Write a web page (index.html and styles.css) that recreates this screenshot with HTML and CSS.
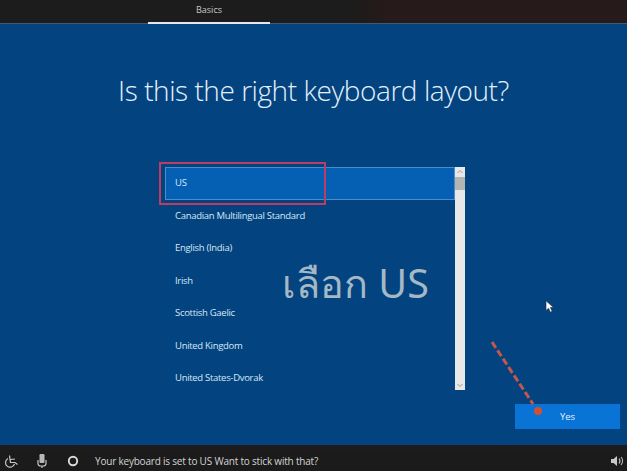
FILE: index.html
```html
<!DOCTYPE html>
<html lang="en">

<head>
    <meta charset="UTF-8">
    <meta name="viewport" content="width=device-width, initial-scale=1.0">
    <title>Keyboard layout</title>
    <link rel="stylesheet" href="styles.css">
</head>

<body>
    <div id="setup">
        <header class="topbar">
            <div class="tab">Basics</div>
        </header>

        <main class="content">
            <h1 class="title">Is this the right keyboard layout?</h1>

            <div class="picker">
                <ul class="layouts">
                    <li class="layout selected">US</li>
                    <li class="layout">Canadian Multilingual Standard</li>
                    <li class="layout">English (India)</li>
                    <li class="layout">Irish</li>
                    <li class="layout">Scottish Gaelic</li>
                    <li class="layout">United Kingdom</li>
                    <li class="layout">United States-Dvorak</li>
                </ul>
                <div class="scrollbar">
                    <svg class="scroll-arrow" viewBox="0 0 10 10" width="10" height="10">
                        <path d="M2.5 6 5 3.5 7.5 6" fill="none" stroke="#9a9a9a" stroke-width="1" />
                    </svg>
                    <div class="thumb"></div>
                    <div class="track"></div>
                    <svg class="scroll-arrow" viewBox="0 0 10 10" width="10" height="10">
                        <path d="M2.5 4 5 6.5 7.5 4" fill="none" stroke="#9a9a9a" stroke-width="1" />
                    </svg>
                </div>
            </div>

            <div class="actions">
                <button class="yes">Yes</button>
            </div>
        </main>

        <footer class="bottombar">
            <svg class="icon icon-access" viewBox="0 0 16 16" width="16" height="16">
                <path d="M5 5.500A4.600 4.600 0 1 0 11.500 11" fill="none" stroke="#c8c8c8" stroke-width="1.200" />
                <path d="M6.500 2.500 7.500 9.500 12 9.500 14.500 11.500M7.500 6.500 12 6" fill="none" stroke="#c8c8c8" stroke-width="1.200" />
            </svg>
            <svg class="icon icon-mic" viewBox="0 0 16 16" width="16" height="16">
                <rect x="5.500" y="1" width="5" height="9" rx="1.200" fill="#b8b8b8" />
                <path d="M4 7v3.500a2.500 2.500 0 0 0 2.500 2.500h3a2.500 2.500 0 0 0 2.500-2.500V7M8 13v2" fill="none" stroke="#c8c8c8" stroke-width="1.200" />
            </svg>
            <svg class="icon icon-cortana" viewBox="0 0 16 16" width="16" height="16">
                <circle cx="8" cy="8" r="4.200" fill="none" stroke="#dcdcdc" stroke-width="1.900" />
            </svg>
            <span class="prompt">Your keyboard is set to US Want to stick with that?</span>
            <svg class="icon icon-sound" viewBox="0 0 16 16" width="16" height="16">
                <path d="M2 6h2.500L8 3v10l-3.500-3H2z" fill="#c8c8c8" />
                <path d="M10 5.500a4 4 0 0 1 0 5M12 4a6 6 0 0 1 0 8" fill="none" stroke="#c8c8c8" stroke-width="1.100" />
            </svg>
        </footer>

        <!-- annotations drawn over the screenshot -->
        <div class="mark-box"></div>
        <div class="mark-text">เลือก US</div>
        <svg class="mark-arrow" viewBox="0 0 60 80" width="60" height="80">
            <path d="M2 2 43 64" fill="none" stroke="#c4574a" stroke-width="3" stroke-dasharray="7 3" />
            <circle cx="48" cy="71" r="4" fill="#d2502f" />
        </svg>
        <svg class="cursor" viewBox="0 0 10 15" width="9" height="13">
            <path d="M1 1v11l3-2.500 2 4.500 2-1-2-4.300h3.500z" fill="#fff" stroke="#222" stroke-width="0.600" />
        </svg>
    </div>
</body>

</html>
```

FILE: styles.css
```css
* {
    box-sizing: border-box;
}

body {
    font-family: 'Open Sans', 'Noto Sans', sans-serif;
    background-color: #03437f;
    margin: 0;
}

#setup {
    position: relative;
    width: 627px;
    height: 471px;
    display: flex;
    flex-direction: column;
    overflow: hidden;
    color: #fff;
}

.topbar {
    height: 24px;
    flex: none;
    padding-left: 148px;
    background: linear-gradient(90deg, #1c1c1c 55%, #261a1a 62%, #261a1a 100%);
    border-bottom: 1px solid #3d5a78;
}

.tab {
    width: 122px;
    height: 24px;
    padding-top: 3px;
    font-size: 9px;
    line-height: 13px;
    text-align: center;
    color: #c9c9c9;
    border-bottom: 2px solid #e4e8ec;
}

.content {
    flex: 1;
    display: flex;
    flex-direction: column;
    background-color: #03437f;
}

.title {
    margin: 46px 0 0;
    font-size: 28px;
    line-height: 40px;
    font-weight: 300;
    letter-spacing: -0.45px;
    text-align: center;
    color: #e3f0fa;
}

.picker {
    display: flex;
    width: 300px;
    height: 223px;
    margin: 57px 0 0 165px;
}

.layouts {
    flex: 1;
    margin: 0;
    padding: 0;
    list-style: none;
}

.layout {
    height: 32.500px;
    padding-left: 10px;
    font-size: 9.500px;
    letter-spacing: -0.3px;
    line-height: 32px;
    color: #d4e8f8;
}

.selected {
    background-color: #0560b4;
    border: 1px solid #4d8cc8;
    padding-left: 9px;
    line-height: 30px;
}

.scrollbar {
    width: 10px;
    display: flex;
    flex-direction: column;
    background-color: #e8e8e8;
}

.scroll-arrow {
    flex: none;
}

.thumb {
    height: 13px;
    background-color: #b4b4b4;
}

.track {
    flex: 1;
}

.actions {
    display: flex;
    justify-content: flex-end;
    margin-top: 14px;
    padding-right: 7px;
}

.yes {
    width: 105px;
    height: 25px;
    padding: 0;
    font-family: inherit;
    font-size: 9.500px;
    color: #e4f1fb;
    background-color: #0a74d6;
    border: none;
}

.bottombar {
    height: 26px;
    flex: none;
    display: flex;
    align-items: center;
    background: linear-gradient(180deg, #241a1c 0, #1b1b1b 7px);
    padding: 5px 2px 0 3px;
}

.icon {
    flex: none;
}

.icon-mic {
    margin-left: 15px;
}

.icon-cortana {
    margin-left: 15px;
}

.prompt {
    margin-left: 14px;
    font-size: 10px;
    letter-spacing: -0.2px;
    color: #d4d4d4;
    flex: 1;
}

.mark-box {
    position: absolute;
    left: 159px;
    top: 162px;
    width: 167px;
    height: 43px;
    border: 2px solid #bd3d62;
}

.mark-text {
    position: absolute;
    left: 282px;
    top: 256px;
    font-family: 'Noto Sans', 'DejaVu Sans', sans-serif;
    font-size: 39.500px;
    line-height: 54px;
    color: #a5b8c6;
}

.mark-arrow {
    position: absolute;
    left: 490px;
    top: 340px;
}

.cursor {
    position: absolute;
    left: 545px;
    top: 300px;
}
```
